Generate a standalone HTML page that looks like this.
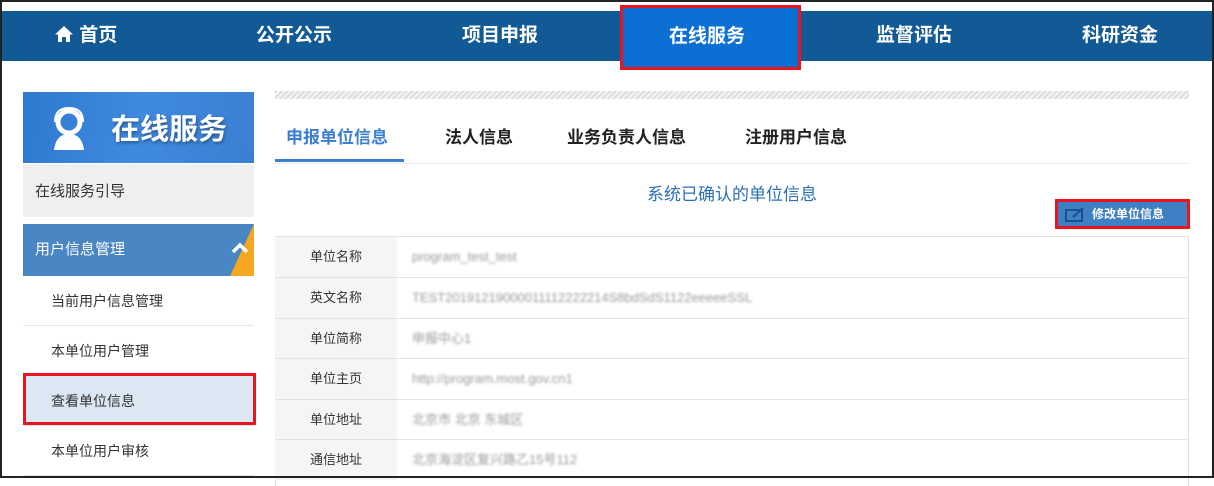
<!DOCTYPE html><html><head><meta charset="utf-8"><style>
*{margin:0;padding:0;box-sizing:border-box}
body{width:1214px;height:478px;overflow:hidden;background:#fff;font-family:"Liberation Sans","Noto Sans CJK SC",sans-serif;position:relative;}
.abs{position:absolute}
.nav{left:0;top:11px;width:1214px;height:50px;background:#115a96;}
.nav span{position:absolute;top:0;line-height:50px;color:#fff;font-size:19px;font-weight:bold}
.hl{left:620px;top:5px;width:181px;height:65px;background:#0c6fd3;border:3px solid #e8141e}
.side{left:23px;width:231px}
.sub{font-size:14px;color:#333;padding-left:28px;border-bottom:1px solid #e6e6e6;height:50px;line-height:50px}
.tab{position:absolute;top:123px;font-size:17px;font-weight:bold;color:#222}
.row{position:absolute;left:275px;width:914px;height:41px;border-top:1px solid #e3e3e3;font-size:13px}
.row .l{position:absolute;left:0;top:0;width:122px;height:40px;background:#f5f5f5;text-align:center;line-height:40px;color:#333}
.row .v{position:absolute;left:137px;line-height:40px;color:#999;filter:blur(1.2px)}
</style></head><body>
<div class="abs nav">
<span style="left:54px"><svg width="20" height="18" viewBox="0 0 20 18" style="vertical-align:-2px"><path d="M10 1 L19 9.5 H16 V17 H12 V12 H8 V17 H4 V9.5 H1 Z" fill="#fff"/></svg> 首页</span>
<span style="left:256px">公开公示</span>
<span style="left:462px">项目申报</span>
<span style="left:876px">监督评估</span>
<span style="left:1082px">科研资金</span>
</div>
<div class="abs hl"><span style="position:absolute;left:46px;top:0;line-height:58px;color:#fff;font-size:19px;font-weight:bold">在线服务</span></div>

<div class="abs side" style="top:92px;height:71px;background:linear-gradient(100deg,#2f78d0,#3f8ae0 50%,#3a7fd2)">
<svg class="abs" style="left:24px;top:14px" width="48" height="46" viewBox="0 0 48 46"><circle cx="22" cy="16" r="11" fill="none" stroke="#fff" stroke-width="5"/><path d="M7 44 Q9 28 22 28 Q35 28 37 44 Z" fill="#fff"/><path d="M8 16 Q8 2 22 2 Q36 2 36 16" fill="none" stroke="#fff" stroke-width="2"/></svg>
<span class="abs" style="left:88px;top:14px;font-size:29px;color:#fff;font-weight:bold;text-shadow:1px 2px 3px rgba(0,0,0,.35)">在线服务</span></div>
<div class="abs side" style="top:164px;height:53px;background:#eeeff1;font-size:15px;color:#333;line-height:56px;padding-left:12px">在线服务引导</div>
<div class="abs side" style="top:224px;height:52px;background:#4a86c4;font-size:15px;color:#fff;line-height:52px;padding-left:12px;overflow:hidden">用户信息管理
<div class="abs" style="right:0;top:0;width:0;height:0;border-left:24px solid transparent;border-bottom:52px solid #f5a623"></div>
<svg class="abs" style="left:208px;top:18px" width="18" height="12"><path d="M2 10 L9 3 L16 10" stroke="#fff" stroke-width="3.5" fill="none"/></svg></div>
<div class="abs side" style="top:276px">
<div class="sub">当前用户信息管理</div>
<div class="sub">本单位用户管理</div>
<div class="sub" style="background:#dbe7f3">查看单位信息</div>
<div class="sub">本单位用户审核</div>
</div>
<div class="abs" style="left:23px;top:373px;width:233px;height:52px;border:3px solid #e8141e"></div>

<div class="abs" style="left:275px;top:91px;width:914px;height:8px;background:repeating-linear-gradient(135deg,#ddd 0 2px,#f4f4f4 2px 4px)"></div>
<span class="tab" style="left:286px;color:#3b7fd0">申报单位信息</span>
<span class="tab" style="left:445px">法人信息</span>
<span class="tab" style="left:567px">业务负责人信息</span>
<span class="tab" style="left:745px">注册用户信息</span>
<div class="abs" style="left:275px;top:163px;width:914px;height:1px;background:#e6e6e6"></div>
<div class="abs" style="left:275px;top:159px;width:129px;height:3px;background:#3b7fd0"></div>
<div class="abs" style="left:275px;top:180px;width:914px;text-align:center;font-size:17px;color:#2a6fb8">系统已确认的单位信息</div>
<div class="abs" style="left:1055px;top:199px;width:135px;height:30px;border:3px solid #e8141e;background:#3f7fc4;color:#fff;font-size:12px;font-weight:bold;line-height:24px;padding-left:34px">修改单位信息
<svg class="abs" style="left:7px;top:4px" width="20" height="16"><rect x="1" y="4" width="16" height="11" fill="none" stroke="#1d4f88" stroke-width="2"/><path d="M8 11 L18 2" stroke="#1d4f88" stroke-width="2"/></svg></div>
<div class="abs" style="left:275px;top:236px;width:914px;height:250px;border:1px solid #ddd;border-bottom:none"></div>
<div class="row" style="top:236px"><div class="l">单位名称</div><div class="v">program_test_test</div></div>
<div class="row" style="top:277px"><div class="l">英文名称</div><div class="v">TEST20191219000011112222214S8bdSdS1122eeeeeSSL</div></div>
<div class="row" style="top:318px"><div class="l">单位简称</div><div class="v">申报中心1</div></div>
<div class="row" style="top:358px"><div class="l">单位主页</div><div class="v">http://program.most.gov.cn1</div></div>
<div class="row" style="top:399px"><div class="l">单位地址</div><div class="v">北京市 北京 东城区</div></div>
<div class="row" style="top:439px"><div class="l">通信地址</div><div class="v">北京海淀区复兴路乙15号112</div></div>
<div class="abs" style="left:0;top:0;width:1214px;height:478px;border:2px solid #222"></div>
</body></html>
